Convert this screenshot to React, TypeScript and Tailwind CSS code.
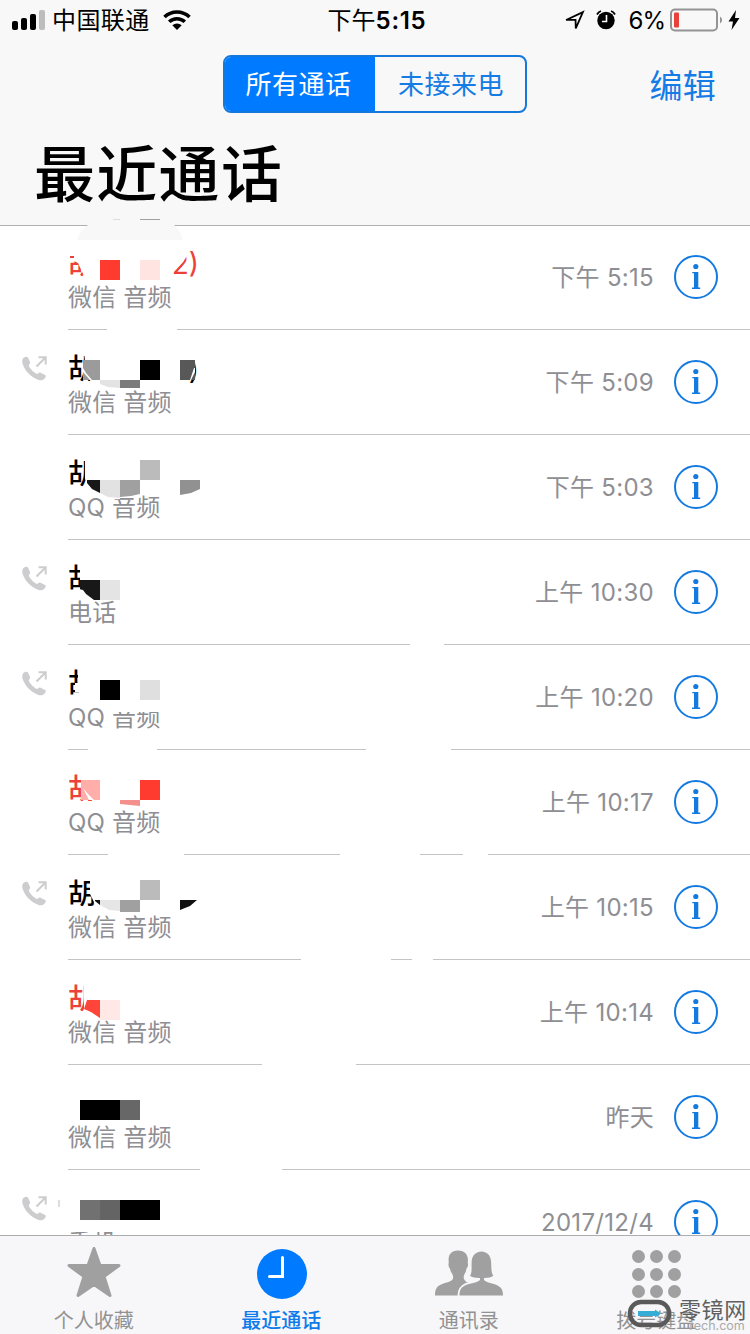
import { ReactNode } from 'react';
import clsx from 'clsx';

type Block = [x: number, y: number, w: number, h: number, fill: string];

interface Call {
  source: string;
  time: string;
  name?: string;
  suffix?: string;
  missed?: boolean;
  outgoing?: boolean;
  // white shapes that hide the contact name, then the mosaic tiles on top
  cover?: string;
  blocks?: Block[];
  trim?: string;
  gaps?: [from: number, to: number][];
}

const calls: Call[] = [
  {
    source: '微信 音频',
    time: '下午 5:15',
    name: '胡',
    suffix: '2)',
    missed: true,
    cover: 'M66 15H187V31L183 37L174 46L173 49L160 51H84L78 38L74 36V34H66Z',
    blocks: [
      [70, 31, 4, 1.5, '#eb4138'],
      [100, 35, 20, 20, '#ff3b30'],
      [140, 35, 20, 20, '#ffe4e1'],
    ],
    gaps: [[107, 177]],
  },
  {
    source: '微信 音频',
    time: '下午 5:09',
    name: '胡',
    suffix: ')',
    outgoing: true,
    cover: 'M84 20H194V30L191 43L187 54H92L86 43Z',
    blocks: [
      [83, 30, 17, 20, '#9b9b9b'],
      [140, 30, 20, 20, '#000'],
      [180, 30, 15, 20, '#585858'],
      [100, 50, 20, 8, '#e3e3e3'],
      [120, 50, 20, 8, '#7c7c7c'],
    ],
    trim: 'M83 38L86 43L92 50H90L83 42ZM194 38L190 50H191L195 42V38ZM100 54L108 57L120 58V60H100Z',
  },
  {
    source: 'QQ 音频',
    time: '下午 5:03',
    name: '胡',
    cover: 'M85 20H180V58H96L85 44Z',
    blocks: [
      [140, 25, 20, 20, '#bbb'],
      [87, 45, 13, 15, '#181818'],
      [100, 45, 20, 18, '#e2e2e2'],
      [120, 45, 20, 17, '#a0a0a0'],
      [180, 45, 20, 16, '#919191'],
    ],
    trim: 'M87 48L92 54L100 58V61H87ZM100 58L108 62L120 63V64H100ZM120 62L131 61L140 59V63H120ZM180 60L191 58L200 54V63H180Z',
  },
  {
    source: '电话',
    time: '上午 10:30',
    name: '胡',
    outgoing: true,
    cover: 'M80 18H130V60H94L84 50L80 46Z',
    blocks: [
      [80, 40, 20, 20, '#181818'],
      [100, 40, 20, 20, '#e4e4e4'],
    ],
    trim: 'M79 49L83 50L86 54L94 60H79Z',
    gaps: [[410, 444]],
  },
  {
    source: 'QQ 音频',
    time: '上午 10:20',
    name: '胡',
    outgoing: true,
    cover: 'M78 18H170V60H80L79 50V47H75V38H78ZM96 60H162V67H112Z',
    blocks: [
      [100, 35, 20, 20, '#000'],
      [140, 35, 20, 20, '#dfdfdf'],
    ],
    gaps: [[88, 157], [366, 451]],
  },
  {
    source: 'QQ 音频',
    time: '上午 10:17',
    name: '胡',
    missed: true,
    cover: 'M82 18H150V53H94L87 44L83 35Z',
    blocks: [
      [81, 30, 19, 20, '#ffaeaa'],
      [140, 30, 20, 20, '#ff3b30'],
      [120, 50, 20, 6, '#f4908b'],
    ],
    trim: 'M83 38L88 44L94 50H89ZM120 54L130 55L140 56V58H120Z',
    gaps: [[108, 184], [340, 420], [463, 488]],
  },
  {
    source: '微信 音频',
    time: '上午 10:15',
    name: '胡',
    outgoing: true,
    cover: 'M90 18H170V59H98L94 47L90 39Z',
    blocks: [
      [140, 25, 20, 20, '#bbb'],
      [95, 45, 5, 5, '#111'],
      [100, 45, 20, 12, '#e6e6e6'],
      [120, 45, 20, 12, '#a0a0a0'],
      [180, 45, 17, 10, '#111'],
    ],
    trim: 'M95 46L100 50H95ZM100 50L109 55L120 56V58H100ZM180 55L190 51L197 45V57H180Z',
    gaps: [[301, 391], [412, 433]],
  },
  {
    source: '微信 音频',
    time: '上午 10:14',
    name: '胡',
    missed: true,
    cover: 'M84 18H130V58H94L84 50Z',
    blocks: [
      [84, 40, 16, 18, '#ff4439'],
      [100, 40, 20, 20, '#ffe8e6'],
    ],
    trim: 'M84 40H87L84 49L91 52L100 58H84Z',
    gaps: [[262, 356]],
  },
  {
    source: '微信 音频',
    time: '昨天',
    blocks: [
      [80, 35, 40, 20, '#000'],
      [120, 35, 20, 20, '#676767'],
    ],
    gaps: [[200, 282]],
  },
  {
    source: '手机',
    time: '2017/12/4',
    outgoing: true,
    cover: 'M66 55H120V62H66Z',
    blocks: [
      [80, 30, 20, 20, '#717171'],
      [100, 30, 20, 20, '#646464'],
      [120, 30, 40, 20, '#000'],
      [58, 30, 2, 7, '#ddd'],
    ],
  },
];

function OutgoingIcon() {
  return (
    <svg viewBox="0 0 25 25" className="h-[25px] w-[25px]">
      <path
        d="M1.2 2.2C3 .4 5.3.2 6 1.5L8 6c.4 1-.1 1.8-.8 2.6-.7.8-.3 1.6.3 2.6a21 21 0 0 0 6.3 6.3c1 .6 1.6.5 2.4-.2.7-.7 1.4-.9 2.3-.5l4.600 2.200c1 .6 1 1.500-.1 3C21.500 24 19 25 16 23.800 9 21 3.500 15.500.8 8.500.0 6 .0 3.500 1.200 2.200Z"
        fill="#cdcdcf"
      />
      <path d="M14.500 10.500 23 2M16.500 1.300h7.200v7.200" fill="none" stroke="#cdcdcf" strokeWidth="2" />
    </svg>
  );
}

function InfoIcon() {
  return (
    <svg viewBox="0 0 44 44" className="mb-[2px] h-[44px] w-[44px]">
      <circle cx="22" cy="22" r="21" fill="none" stroke="#147ae0" strokeWidth="2" />
      <circle cx="21.800" cy="11.500" r="2.600" fill="#147ae0" />
      <path d="M18.300 16.900H24.300V32.600H26.200V34H18V32.600H20V18.300H18.300Z" fill="#147ae0" />
    </svg>
  );
}

function CallRow({ call }: { call: Call }) {
  return (
    <div className="relative flex h-[105px] shrink-0">
      <div className="w-[68px] shrink-0 pl-[22px] pt-[26px]">{call.outgoing && <OutgoingIcon />}</div>
      <div className="relative flex flex-1 justify-between pr-[32px]">
        <div className="pt-[21px]">
          <div
            className={clsx(
              'flex h-[35px] text-[28px] font-medium leading-[37px]',
              call.missed ? 'text-[#eb4138]' : 'text-black'
            )}
          >
            <span>{call.name}</span>
            {call.suffix && (
              <span className="w-[103px] text-right font-normal">{call.suffix}</span>
            )}
          </div>
          <div className="text-[24px] leading-[33px] tracking-[0.2px] text-[#8e8e93]">{call.source}</div>
        </div>
        <div className="flex items-center gap-[20px]">
          <span className="pt-px text-[24px] leading-none tracking-[0.3px] text-[#8e8e93]">{call.time}</span>
          <InfoIcon />
        </div>
        <div className="absolute inset-x-0 bottom-0 h-px bg-[#c4c4c7]" />
      </div>
      <svg viewBox="0 0 210 105" className="absolute left-0 top-0 h-[105px] w-[210px]">
        {call.cover && <path d={call.cover} fill="#fff" />}
        {call.blocks?.map(([x, y, w, h, fill]) => (
          <rect key={`${x}-${y}`} x={x} y={y} width={w} height={h} fill={fill} shapeRendering="crispEdges" />
        ))}
        {call.trim && <path d={call.trim} fill="#fff" />}
      </svg>
      {call.gaps?.map(([from, to]) => (
        <span key={from} className="absolute bottom-0 h-px bg-white" style={{ left: from, width: to - from }} />
      ))}
    </div>
  );
}

function StatusBar() {
  return (
    <div className="flex h-[40px] items-center justify-between pl-[12px] pr-[10px] text-[24px] leading-none">
      <div className="flex w-[260px] items-center">
        <svg viewBox="0 0 33 20" className="h-[20px] w-[33px]">
          <rect x="0" y="11" width="6" height="9" rx="2" />
          <rect x="9" y="8" width="6" height="12" rx="2" />
          <rect x="18" y="4" width="6" height="16" rx="2" />
          <rect x="27" y="0" width="6" height="20" rx="2" fill="#bdbdbd" />
        </svg>
        <span className="ml-[7px] pt-[2px] tracking-[0.4px]">中国联通</span>
        <svg viewBox="0 0 28 20" className="ml-[13px] h-[20px] w-[28px]">
          <path d="M1.500 7a18 18 0 0 1 25 0M6.200 11.800a11.300 11.300 0 0 1 15.600 0" fill="none" stroke="#000" strokeWidth="3.600" />
          <path d="M14 20 9.300 15.300a7 7 0 0 1 9.400 0Z" />
        </svg>
      </div>
      <span className="flex items-center pl-[2px] pt-[2px]">
        下午<b className="font-semibold tracking-[0.7px]">5:15</b>
      </span>
      <div className="flex w-[260px] items-center justify-end">
        <svg viewBox="0 0 20 20" className="h-[21px] w-[21px]">
          <path d="M2 9.500 18 2 11.200 17.500 11 9.500Z" fill="none" stroke="#000" strokeWidth="1.700" />
        </svg>
        <svg viewBox="0 0 20 20" className="ml-[11px] h-[20px] w-[20px]">
          <circle cx="10" cy="10.500" r="8.700" />
          <path d="M1 4.500A7 7 0 0 1 5 1M19 4.500A7 7 0 0 0 15 1" fill="none" stroke="#000" strokeWidth="1.800" />
          <path d="M10.500 5v6.500H6" fill="none" stroke="#fff" strokeWidth="1.600" />
        </svg>
        <span className="ml-[13px] pt-[2px] tracking-[-1px]">6%</span>
        <svg viewBox="0 0 54 24" className="ml-[5px] h-[24px] w-[54px]">
          <rect x="1" y="1.500" width="46" height="21" rx="4" fill="none" stroke="#939393" strokeWidth="2" />
          <rect x="4" y="4.500" width="5" height="15" rx="1" fill="#e8433a" />
          <path d="M50 8.500a4 4 0 0 1 0 7Z" fill="#939393" />
        </svg>
        <svg viewBox="0 0 12 20" className="ml-[4px] h-[20px] w-[12px]">
          <path d="M8 0 .5 11.500H5L3.500 20 11.500 8H7Z" />
        </svg>
      </div>
    </div>
  );
}

function StarIcon() {
  return (
    <svg viewBox="0 0 54 52" className="mb-[3px] h-[52px] w-[54px]">
      <path
        d="M27 2.500 33 19.500H52L37 30.500 43 49.500 27 38.500 11 49.500 17 30.500 2 19.500H21Z"
        fill="#a0a0a0"
        stroke="#a0a0a0"
        strokeWidth="3"
        strokeLinejoin="round"
      />
    </svg>
  );
}

function ClockIcon() {
  return (
    <svg viewBox="0 0 50 50" className="ml-[2px] mt-[2px] h-[50px] w-[50px]">
      <circle cx="25" cy="25" r="25" fill="#007aff" />
      <path d="M25.500 8.500v19H12.500" fill="none" stroke="#fff" strokeWidth="3" strokeLinecap="round" />
    </svg>
  );
}

function PeopleIcon() {
  return (
    <svg viewBox="0 0 68 46" className="h-[46px] w-[68px]">
      <path
        d="M0 45.500c0-7 2-9 6-11 5-2.300 11-2.500 12-6 .4-1.500 0-3.500-1-5-1.500-2-1.500-3-2-5-1.200-.7-2-4-1.200-6C12.500 4 17 .5 23 .5s11 3.500 9.700 12c.8 2 .1 5-1.200 6-.4 3-1 4-2 5.500-1 2-1 3.500-.5 5 .8 2 2.500 3 5 4L32 45.500Z"
        fill="#a0a0a0"
      />
      <path
        d="M24.500 45.500c0-6 2-8.500 6.500-10.500 5-2 12-2.500 14-5v-2c-3.500.2-8-.7-10-2.200 2.500-4 1.200-9 1.700-14.800C37.300 5 41.500 1.500 46.500 1.500S55.500 5 56 11c.6 6-.2 11 2.300 14.800-1.800 1.500-6 2.400-9.300 2.200v2c2 2.500 8 3 12.500 5 4.500 2 6.500 4.500 6.500 10.500Z"
        fill="#a0a0a0"
        stroke="#f7f7f9"
        strokeWidth="4"
        paintOrder="stroke"
      />
    </svg>
  );
}

function KeypadIcon() {
  return (
    <div className="mt-[2px] grid grid-cols-3 gap-[4.800px]">
      {Array.from({ length: 9 }, (_, i) => (
        <span key={i} className="h-[13px] w-[13px] rounded-full bg-[#a0a0a0]" />
      ))}
    </div>
  );
}

function Tab({ label, active, children }: { label: string; active?: boolean; children: ReactNode }) {
  return (
    <div className="flex flex-1 flex-col items-center">
      <div className="flex h-[74px] items-center">{children}</div>
      <span
        className={clsx(
          'text-[20px] leading-[22px]',
          active ? 'font-medium text-[#0f7bea]' : 'text-[#929292]'
        )}
      >
        {label}
      </span>
    </div>
  );
}

function Watermark() {
  return (
    <div className="absolute bottom-0 right-[3px] flex h-[38px] w-[120px]">
      <svg viewBox="0 0 46 30" className="mt-[2px] h-[30px] w-[46px]">
        <rect x="3" y="4" width="39" height="23" rx="11" fill="none" stroke="#5a5a5a" strokeWidth="4.500" />
        <path d="M11 13h17v-1.500l6 4-6 4V18H11Z" fill="#36add6" />
      </svg>
      <div className="ml-[6px] flex flex-col">
        <span className="text-[22px] leading-[28px] tracking-[0.6px] text-[#606060]">零镜网</span>
        <span className="-mt-[5px] self-end pr-[2px] text-[12.500px] leading-[14px] text-[#aaa]">rech.com</span>
      </div>
    </div>
  );
}

export default function App() {
  return (
    <div className="relative flex h-[1334px] w-[750px] flex-col overflow-hidden bg-white font-['Inter','Noto_Sans_CJK_SC',sans-serif] text-black">
      <header className="relative flex h-[226px] shrink-0 flex-col border-b border-[#b0b0b2] bg-[#f8f8f8]">
        <StatusBar />
        <div className="relative mt-[15px] flex h-[58px] justify-center">
          <div className="flex w-[304px] overflow-hidden rounded-[8px] border-2 border-[#1579dc] text-[26px] leading-[56px] tracking-[0.5px]">
            <span className="w-[150px] bg-[#007aff] pr-[3px] text-center text-white">所有通话</span>
            <span className="flex-1 pl-[2px] text-center text-[#157be5]">未接来电</span>
          </div>
          <span className="absolute right-[34px] top-0 text-[33px] leading-[62px] tracking-[0.3px] text-[#157be5]">编辑</span>
        </div>
        <h1 className="ml-[34px] mt-[18px] text-[61px] font-medium leading-[88px] tracking-[1.300px]">最近通话</h1>
        <svg viewBox="0 0 120 22" className="absolute left-[70px] top-[218px] z-10 h-[22px] w-[120px]">
          <path d="M7 22Q10 13 18 7H104Q111 13 113 22Z" fill="#f8f8f8" />
          <path d="M70 1.500H90" stroke="#a0a0a0" />
          <path d="M43 1.500H50" stroke="#ddd" />
        </svg>
      </header>

      <main className="-mt-px flex min-h-0 flex-1 flex-col overflow-hidden">
        {calls.map((call, i) => (
          <CallRow key={i} call={call} />
        ))}
      </main>

      <nav className="relative flex h-[99px] shrink-0 border-t border-[#adadb0] bg-[#f7f7f9]">
        <Tab label="个人收藏">
          <StarIcon />
        </Tab>
        <Tab label="最近通话" active>
          <ClockIcon />
        </Tab>
        <Tab label="通讯录">
          <PeopleIcon />
        </Tab>
        <Tab label="拨号键盘">
          <KeypadIcon />
        </Tab>
        <Watermark />
      </nav>
    </div>
  );
}
